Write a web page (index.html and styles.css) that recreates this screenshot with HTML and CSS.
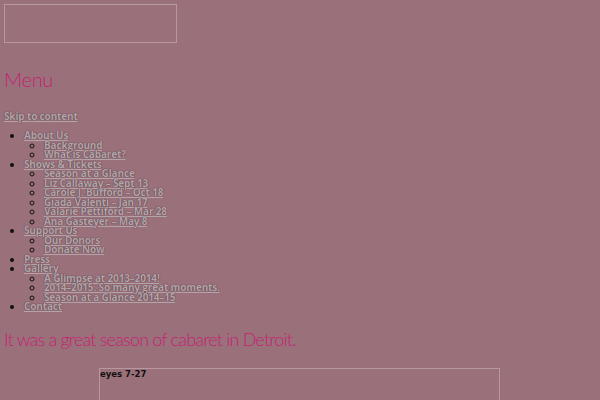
FILE: index.html
```html
<!DOCTYPE html>
<html>
<head>
<meta charset="utf-8">
<link rel="stylesheet" href="styles.css">
</head>
<body>
<div class="logo-box"></div>
<h2 class="menu-title">Menu</h2>
<a class="skip" href="#content">Skip to content</a>
<ul class="nav">
  <li><a href="#">About Us</a>
    <ul>
      <li><a href="#">Background</a></li>
      <li><a href="#">What is Cabaret?</a></li>
    </ul>
  </li>
  <li><a href="#">Shows &amp; Tickets</a>
    <ul>
      <li><a href="#">Season at a Glance</a></li>
      <li><a href="#">Liz Callaway – Sept 13</a></li>
      <li><a href="#">Carole J. Bufford – Oct 18</a></li>
      <li><a href="#">Giada Valenti – Jan 17</a></li>
      <li><a href="#">Valarie Pettiford – Mar 28</a></li>
      <li><a href="#">Ana Gasteyer – May 8</a></li>
    </ul>
  </li>
  <li><a href="#">Support Us</a>
    <ul>
      <li><a href="#">Our Donors</a></li>
      <li><a href="#">Donate Now</a></li>
    </ul>
  </li>
  <li><a href="#">Press</a></li>
  <li><a href="#">Gallery</a>
    <ul>
      <li><a href="#">A Glimpse at 2013–2014!</a></li>
      <li><a href="#">2014–2015. So many great moments.</a></li>
      <li><a href="#">Season at a Glance 2014–15</a></li>
    </ul>
  </li>
  <li><a href="#">Contact</a></li>
</ul>
<h1 class="headline" id="content">It was a great season of cabaret in Detroit.</h1>
<div class="video-box"><span class="video-title">eyes 7-27</span></div>
</body>
</html>
```
FILE: styles.css
```css
html, body {
  margin: 0;
  padding: 0;
}
body {
  background: #9a707b;
  padding: 4px;
  font-family: "Open Sans", sans-serif;
}
.logo-box {
  width: 171px;
  height: 37px;
  border: 1px solid #b797a0;
}
.menu-title {
  margin: 22px 0 0 0;
  font-family: "Lato", sans-serif;
  font-weight: 300;
  font-size: 20px;
  letter-spacing: -0.3px;
  line-height: 28px;
  color: #c41f72;
}
.skip, .nav a {
  color: #b2a4a9;
  font-weight: 700;
  font-size: 10px;
  letter-spacing: -0.15px;
  text-decoration: underline;
  text-shadow: 0 0 1px #5e4048, 0 0 1px #5e4048;
}
.skip {
  display: block;
  margin-top: 17px;
  line-height: 12px;
}
.nav {
  margin: 9px 0 0 0;
  padding-left: 20px;
  font-size: 10px;
  line-height: 9.5px;
  color: #111;
}
.nav ul {
  margin: 0;
  padding-left: 20px;
  list-style: circle;
}
.nav li {
  line-height: 9.5px;
}
.headline {
  margin: 15px 0 0 0;
  font-family: "Lato", sans-serif;
  font-weight: 300;
  font-size: 18px;
  letter-spacing: -0.8px;
  line-height: 24px;
  color: #c41f72;
}
.video-box {
  margin: 17px 0 0 95px;
  width: 399px;
  height: 60px;
  border: 1px solid #b797a0;
  border-bottom: none;
}
.video-title {
  display: block;
  font-family: "DejaVu Sans", sans-serif;
  font-weight: 700;
  font-size: 8.5px;
  line-height: 10px;
  color: #111;
}
```
